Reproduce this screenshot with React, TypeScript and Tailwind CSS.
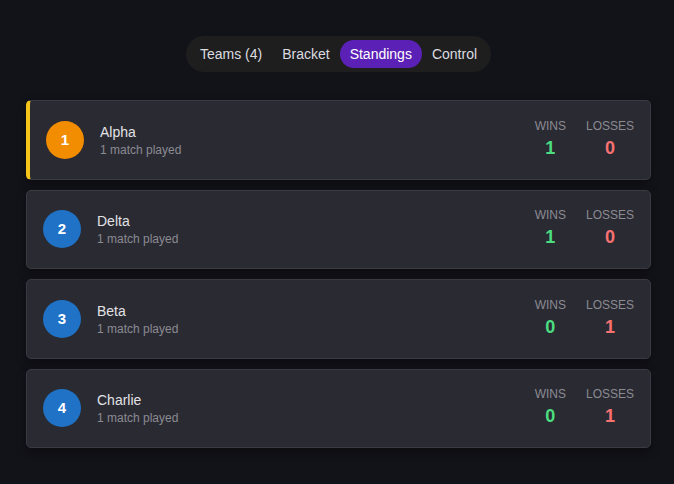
import React from "react";

interface Team {
  rank: number;
  name: string;
  wins: number;
  losses: number;
}

const teams: Team[] = [
  { rank: 1, name: "Alpha", wins: 1, losses: 0 },
  { rank: 2, name: "Delta", wins: 1, losses: 0 },
  { rank: 3, name: "Beta", wins: 0, losses: 1 },
  { rank: 4, name: "Charlie", wins: 0, losses: 1 },
];

const tabs = ["Teams (4)", "Bracket", "Standings", "Control"];

function StandingCard({ team }: { team: Team }) {
  const leader = team.rank === 1;
  return (
    <div
      className={
        leader
          ? "flex h-[79.5px] items-center rounded-[5px] border border-l-4 border-[#3a3a43] border-l-[#f5c518] bg-[#2a2a32] py-4 pl-4 pr-4 shadow-[0_4px_10px_rgba(0,0,0,0.35)]"
          : "flex h-[79.5px] items-center rounded-[5px] border border-[#3a3a43] bg-[#2a2a32] py-4 pl-4 pr-4 shadow-[0_4px_10px_rgba(0,0,0,0.35)]"
      }
    >
      <div
        className={
          leader
            ? "flex size-[38px] shrink-0 items-center justify-center rounded-full bg-[#f28c00] text-[15px] font-bold text-white"
            : "flex size-[38px] shrink-0 items-center justify-center rounded-full bg-[#1f72c6] text-[15px] font-bold text-white"
        }
      >
        {team.rank}
      </div>
      <div className="ml-4 flex flex-col">
        <span className="text-[14px] leading-5 text-[#e2e2e6]">{team.name}</span>
        <span className="text-[12px] leading-4 text-[#8b8b92]">1 match played</span>
      </div>
      <div className="ml-auto flex gap-5">
        <div className="flex flex-col items-center">
          <span className="text-[12px] leading-4 text-[#8b8b92]">WINS</span>
          <span className="text-[18px] font-semibold leading-7 text-[#4ade80]">{team.wins}</span>
        </div>
        <div className="flex flex-col items-center">
          <span className="text-[12px] leading-4 text-[#8b8b92]">LOSSES</span>
          <span className="text-[18px] font-semibold leading-7 text-[#f87171]">{team.losses}</span>
        </div>
      </div>
    </div>
  );
}

export default function App() {
  return (
    <div
      className="min-h-[484px] bg-[#121219] pl-[26px] pr-[23px] pt-9"
      style={{ fontFamily: '"Liberation Sans", Arial, sans-serif' }}
    >
      <div className="flex justify-center">
        <div className="flex rounded-full bg-[#1e1e1f] p-1">
          {tabs.map((t) => (
            <button
              key={t}
              className={
                t === "Standings"
                  ? "h-7 rounded-full bg-[#5b21b6] px-2.5 text-[14px] text-white"
                  : "h-7 rounded-full px-2.5 text-[14px] text-[#dcdce0]"
              }
            >
              {t}
            </button>
          ))}
        </div>
      </div>
      <div className="mt-7 flex flex-col gap-[10px]">
        {teams.map((team) => (
          <StandingCard key={team.rank} team={team} />
        ))}
      </div>
    </div>
  );
}
